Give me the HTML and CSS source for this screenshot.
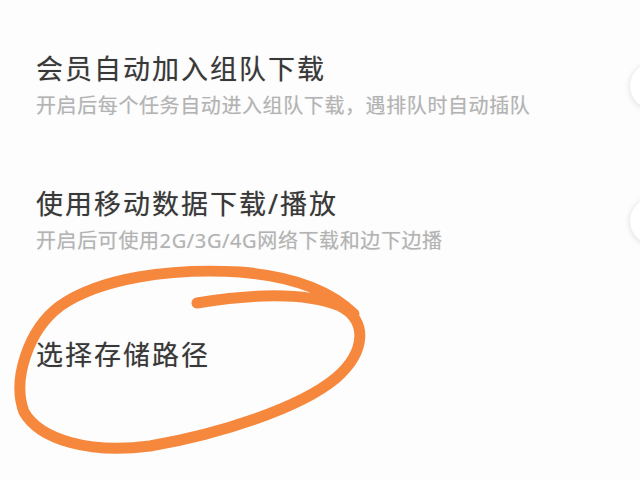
FILE: index.html
```html
<!DOCTYPE html>
<html lang="zh-CN">
<head>
<meta charset="utf-8">
<title>下载设置</title>
<link rel="stylesheet" href="styles.css">
</head>
<body>
<main class="list">
  <section class="item">
    <div class="text">
      <div class="title">会员自动加入组队下载</div>
      <div class="sub">开启后每个任务自动进入组队下载，遇排队时自动插队</div>
    </div>
    <span class="knob"></span>
  </section>
  <section class="item second">
    <div class="text">
      <div class="title">使用移动数据下载/播放</div>
      <div class="sub">开启后可使用2G/3G/4G网络下载和边下边播</div>
    </div>
    <span class="knob"></span>
  </section>
  <section class="item plain">
    <div class="text">
      <div class="title">选择存储路径</div>
    </div>
  </section>
</main>
<svg class="scribble" width="640" height="480" viewBox="0 0 640 480">
  <path d="M197 303 C 240 296, 300 290, 340 306 C 368 320, 366 352, 336 378 C 300 408, 220 434, 150 446 C 90 454, 40 440, 24 412 C 12 380, 28 330, 60 306 C 100 278, 170 268, 240 272 C 290 276, 330 290, 354 314"
        fill="none" stroke="#f6883e" stroke-width="11" stroke-linecap="round" stroke-linejoin="round"/>
</svg>
</body>
</html>
```

FILE: styles.css
```css
html, body {
  margin: 0;
  padding: 0;
  width: 640px;
  height: 480px;
  overflow: hidden;
  background: #fdfdfd;
}

.list {
  width: 604px;
  padding: 51px 0 0 36px;
  display: flex;
  flex-direction: column;
  overflow: hidden;
  font-family: "Noto Sans", "Noto Sans CJK SC", sans-serif;
}

.item {
  display: flex;
  align-items: center;
  justify-content: space-between;
}

.item.second {
  margin-top: 66px;
}

.item.plain {
  margin-top: 82px;
}

.text {
  display: flex;
  flex-direction: column;
  gap: 5px;
}

.title {
  font-size: 27px;
  line-height: 36px;
  letter-spacing: 2px;
  color: #383838;
  font-weight: 400;
  text-shadow: 0 0 1px rgba(60, 60, 60, 0.4);
}

.sub {
  font-size: 20px;
  line-height: 28px;
  letter-spacing: 0.6px;
  color: #b3b3b3;
  text-shadow: 0 0 1px rgba(170, 170, 170, 0.4);
}

.knob {
  flex: none;
  width: 46px;
  height: 46px;
  border-radius: 50%;
  background: #ffffff;
  box-shadow: 0 1px 6px rgba(0, 0, 0, 0.14);
  margin-right: -36px;
}

.scribble {
  position: absolute;
  left: 0;
  top: 0;
  filter: blur(0.4px);
}
```
